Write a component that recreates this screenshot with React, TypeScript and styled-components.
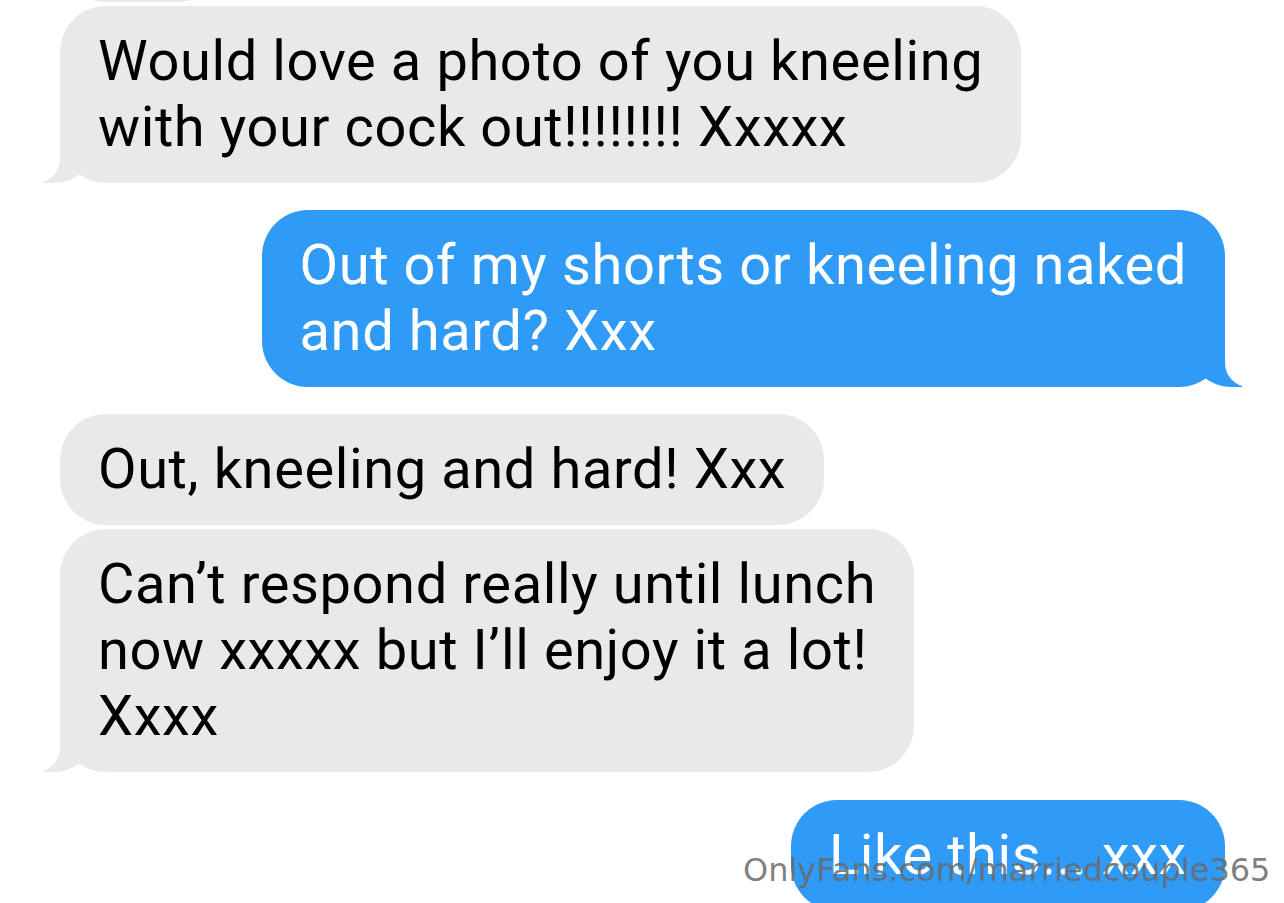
import React from "react";
import styled, { createGlobalStyle, css } from "styled-components";

const Global = createGlobalStyle`
  html, body { margin: 0; padding: 0; background: #ffffff; }
  body { width: 1284px; height: 903px; overflow: hidden; }
`;

const Screen = styled.div`
  position: relative;
  width: 1284px;
  height: 903px;
  overflow: hidden;
  background: #ffffff;
`;

const Thread = styled.div`
  display: flex;
  flex-direction: column;
  padding: 0 59px 0 60px;
  margin-top: -109px;
`;

const Row = styled.div<{ $me?: boolean; $gap: number }>`
  display: flex;
  justify-content: ${(p) => (p.$me ? "flex-end" : "flex-start")};
  margin-top: ${(p) => p.$gap}px;
`;

const GRAY = "#e9e9eb";
const BLUE = "#2f9bf6";

const Bubble = styled.div<{ $me?: boolean; $tail?: boolean }>`
  position: relative;
  box-sizing: border-box;
  font-family: Roboto, "Liberation Sans", sans-serif;
  font-size: 56px;
  line-height: 66px;
  letter-spacing: 0.6px;
  padding: 22px 38px 23px 38px;
  border-radius: 46px;
  background: ${(p) => (p.$me ? BLUE : GRAY)};
  color: ${(p) => (p.$me ? "#ffffff" : "#000000")};
  white-space: pre;
  ${(p) =>
    p.$tail &&
    !p.$me &&
    css`
      &::before {
        content: "";
        position: absolute;
        bottom: 0;
        left: -17px;
        width: 50px;
        height: 60px;
        background: ${GRAY};
        border-bottom-right-radius: 40px 34px;
      }
      &::after {
        content: "";
        position: absolute;
        bottom: 0;
        left: -65px;
        width: 65px;
        height: 60px;
        background: #ffffff;
        border-bottom-right-radius: 24px;
      }
    `}
  ${(p) =>
    p.$tail &&
    p.$me &&
    css`
      &::before {
        content: "";
        position: absolute;
        bottom: 0;
        right: -17px;
        width: 50px;
        height: 60px;
        background: ${BLUE};
        border-bottom-left-radius: 40px 34px;
      }
      &::after {
        content: "";
        position: absolute;
        bottom: 0;
        right: -65px;
        width: 65px;
        height: 60px;
        background: #ffffff;
        border-bottom-left-radius: 24px;
      }
    `}
`;

const Text = styled.span`
  position: relative;
  z-index: 1;
`;

const Watermark = styled.div`
  position: absolute;
  left: 743px;
  top: 848px;
  font-family: "DejaVu Sans", sans-serif;
  font-size: 32px;
  line-height: 44px;
  color: rgba(105, 105, 105, 0.85);
  white-space: nowrap;
  z-index: 5;
`;

const messages: { me?: boolean; tail?: boolean; gap: number; text: string; width?: number }[] = [
  { gap: 0, text: " ", width: 162 },
  { gap: 4, tail: true, text: "Would love a photo of you kneeling\nwith your cock out!!!!!!!! Xxxxx" },
  { me: true, tail: true, gap: 27, text: "Out of my shorts or kneeling naked\nand hard? Xxx" },
  { gap: 27, text: "Out, kneeling and hard! Xxx" },
  { gap: 4, tail: true, text: "Can\u2019t respond really until lunch\nnow xxxxx but I\u2019ll enjoy it a lot!\nXxxx" },
  { me: true, gap: 28, text: "Like this... xxx" },
];

export default function App() {
  return (
    <Screen>
      <Global />
      <Thread>
        {messages.map((m, i) => (
          <Row key={i} $me={m.me} $gap={m.gap}>
            <Bubble $me={m.me} $tail={m.tail} style={m.width ? { width: m.width } : undefined}>
              <Text>{m.text}</Text>
            </Bubble>
          </Row>
        ))}
      </Thread>
      <Watermark>OnlyFans.com/marriedcouple365</Watermark>
    </Screen>
  );
}
